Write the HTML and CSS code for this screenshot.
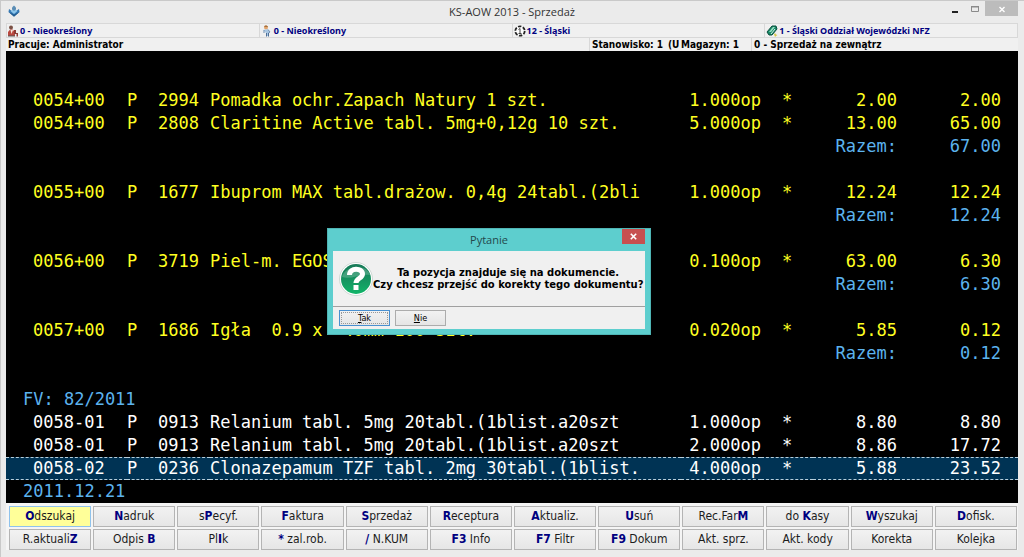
FILE: index.html
```html
<!DOCTYPE html>
<html lang="pl">
<head>
<meta charset="utf-8">
<title>KS-AOW 2013 - Sprzedaż</title>
<link rel="stylesheet" href="styles.css">
</head>
<body>
<div class="window">
  <header class="titlebar">
    <svg class="app-icon" viewBox="0 0 12 12" aria-hidden="true"><path d="M6 11.500.500 7 1 4l3 2h4l3-2 .5 3z" fill="#3478b4"/><path d="m6 9-3.500-3L6 4l3.500 2z" fill="#8cc5ea"/><path d="M4 4.500V2.500L6 .5l2 2v2L6 6z" fill="#5b8db5"/><path d="m.500 7 5.500 2.500L11.500 7 6 11.800z" fill="#245d90"/></svg>
    <h1 class="window-title">KS-AOW 2013 - Sprzedaż</h1>
    <div class="window-controls">
      <button class="win-btn" aria-label="Minimalizuj"><svg viewBox="0 0 10 10"><path d="M2 7h6v2H2z" fill="#222"/></svg></button>
      <button class="win-btn" aria-label="Maksymalizuj"><svg viewBox="0 0 10 10"><path d="M1.500 2.500h7v5h-7z" fill="none" stroke="#8a8a8a"/><path d="M1 2h8v1.500H1z" fill="#8a8a8a"/></svg></button>
      <button class="win-btn win-close" aria-label="Zamknij"><svg viewBox="0 0 10 10"><path d="m2.500 3 5 5m0-5-5 5" stroke="#fff" stroke-width="1.400"/></svg></button>
    </div>
  </header>

  <div class="info-row">
    <div class="info-cell"><svg class="info-icon" viewBox="0 0 12 12" aria-hidden="true"><circle cx="4" cy="2.500" r="2" fill="#7a5145"/><path d="M1 11V7l2-2.500h2.500L8 7v4z" fill="#b9483f"/><path d="m3.500 5 1 4L6 5z" fill="#f4e6dc"/><path d="M7 5h2v3h2v3.500H9.500V9H7z" fill="#8c3b34"/><path d="M1 11h7" stroke="#555"/></svg>0 - Nieokreślony</div>
    <div class="info-cell"><svg class="info-icon" viewBox="0 0 12 12" aria-hidden="true"><circle cx="5" cy="2.500" r="2" fill="#e2a56d"/><path d="M3 1.800C3.500 0 6.500 0 7 2z" fill="#a06b38"/><path d="m2.500 5 2-.5H7L8 6v5H5V8z" fill="#a9c6e2"/><path d="M7 4.500 9 7 7.500 8M3 5v3" stroke="#6c8db1" fill="none"/><path d="M5.500 8v3.500m2-3.500v3.500" stroke="#4e6d94"/></svg>0 - Nieokreślony</div>
    <div class="info-cell"><svg class="info-icon" viewBox="0 0 12 12" aria-hidden="true"><circle cx="6" cy="6" r="4.700" fill="#fff" stroke="#222" stroke-width="1.800" stroke-dasharray="3.400 1.500"/><path d="M4.500 4.500 6 3.500v5M4.500 8.500h3" fill="none" stroke="#444"/></svg>12 - Śląski</div>
    <div class="info-cell"><svg class="info-icon" viewBox="0 0 12 12" aria-hidden="true"><path d="m1 7 5-6h4l1 3-5 6H3z" fill="#188a68" stroke="#0b4e3d"/><path d="m3 7 4-5h2L5 7z" fill="#9ce0c4"/><path d="m5 9 4-5" stroke="#d9f4e9"/><path d="M8 9.500 9 8l1 1.500 1.500.5-1.500 1-1 1-.5-1.500z" fill="#d6c94b"/></svg>1 - Śląski Oddział Wojewódzki NFZ</div>
  </div>
  <div class="session-row">
    <span class="session-user">Pracuje: Administrator</span>
    <span class="session-station">Stanowisko: 1</span>
    <span class="session-mode">(U</span>
    <span class="session-store">Magazyn: 1</span>
    <span class="session-type">0 - Sprzedaż na zewnątrz</span>
  </div>

  <main class="listing">
    <table class="sales">
      <colgroup><col class="c-doc"><col class="c-kind"><col class="c-code"><col class="c-name"><col class="c-qty"><col class="c-mark"><col class="c-price"><col class="c-value"></colgroup>
      <tbody>
        <tr><td>0054+00</td><td>P</td><td>2994</td><td>Pomadka ochr.Zapach Natury 1 szt.</td><td class="num">1.000op</td><td class="mark">*</td><td class="num">2.00</td><td class="num">2.00</td></tr>
        <tr><td>0054+00</td><td>P</td><td>2808</td><td>Claritine Active tabl. 5mg+0,12g 10 szt.</td><td class="num">5.000op</td><td class="mark">*</td><td class="num">13.00</td><td class="num">65.00</td></tr>
        <tr class="note"><td colspan="7" class="num">Razem:</td><td class="num">67.00</td></tr>
        <tr><td colspan="8"></td></tr>
        <tr><td>0055+00</td><td>P</td><td>1677</td><td>Ibuprom MAX tabl.drażow. 0,4g 24tabl.(2bli</td><td class="num">1.000op</td><td class="mark">*</td><td class="num">12.24</td><td class="num">12.24</td></tr>
        <tr class="note"><td colspan="7" class="num">Razem:</td><td class="num">12.24</td></tr>
        <tr><td colspan="8"></td></tr>
        <tr><td>0056+00</td><td>P</td><td>3719</td><td>Piel-m. EGOS</td><td class="num">0.100op</td><td class="mark">*</td><td class="num">63.00</td><td class="num">6.30</td></tr>
        <tr class="note"><td colspan="7" class="num">Razem:</td><td class="num">6.30</td></tr>
        <tr><td colspan="8"></td></tr>
        <tr><td>0057+00</td><td>P</td><td>1686</td><td>Igła  0.9 x  40mm 100 szt.</td><td class="num">0.020op</td><td class="mark">*</td><td class="num">5.85</td><td class="num">0.12</td></tr>
        <tr class="note"><td colspan="7" class="num">Razem:</td><td class="num">0.12</td></tr>
        <tr><td colspan="8"></td></tr>
        <tr class="note"><td colspan="8" class="heading">FV: 82/2011</td></tr>
        <tr class="invoice"><td>0058-01</td><td>P</td><td>0913</td><td>Relanium tabl. 5mg 20tabl.(1blist.a20szt</td><td class="num">1.000op</td><td class="mark">*</td><td class="num">8.80</td><td class="num">8.80</td></tr>
        <tr class="invoice"><td>0058-01</td><td>P</td><td>0913</td><td>Relanium tabl. 5mg 20tabl.(1blist.a20szt</td><td class="num">2.000op</td><td class="mark">*</td><td class="num">8.86</td><td class="num">17.72</td></tr>
        <tr class="invoice selected"><td>0058-02</td><td>P</td><td>0236</td><td>Clonazepamum TZF tabl. 2mg 30tabl.(1blist.</td><td class="num">4.000op</td><td class="mark">*</td><td class="num">5.88</td><td class="num">23.52</td></tr>
        <tr class="note"><td colspan="8" class="heading">2011.12.21</td></tr>
      </tbody>
    </table>
  </main>

  <footer class="commands">
    <button class="cmd active"><b>O</b>dszukaj</button>
    <button class="cmd"><b>N</b>adruk</button>
    <button class="cmd">s<b>P</b>ecyf.</button>
    <button class="cmd"><b>F</b>aktura</button>
    <button class="cmd"><b>S</b>przedaż</button>
    <button class="cmd"><b>R</b>eceptura</button>
    <button class="cmd"><b>A</b>ktualiz.</button>
    <button class="cmd"><b>U</b>suń</button>
    <button class="cmd">Rec.Far<b>M</b></button>
    <button class="cmd">do <b>K</b>asy</button>
    <button class="cmd"><b>W</b>yszukaj</button>
    <button class="cmd"><b>D</b>ofisk.</button>
    <button class="cmd">R.aktuali<b>Z</b></button>
    <button class="cmd">Odpis <b>B</b></button>
    <button class="cmd">Pl<b>I</b>k</button>
    <button class="cmd"><b>*</b> zal.rob.</button>
    <button class="cmd"><b>/</b> N.KUM</button>
    <button class="cmd"><b>F3</b> Info</button>
    <button class="cmd"><b>F7</b> Filtr</button>
    <button class="cmd"><b>F9</b> Dokum</button>
    <button class="cmd">Akt. sprz.</button>
    <button class="cmd">Akt. kody</button>
    <button class="cmd">Korekta</button>
    <button class="cmd">Kolejka</button>
  </footer>
</div>

<section class="dialog" role="dialog" aria-labelledby="dialog-title">
  <header class="dialog-head">
    <h2 class="dialog-title" id="dialog-title">Pytanie</h2>
    <button class="dialog-close" aria-label="Zamknij"><svg viewBox="0 0 10 10"><path d="m2 2 6 6m0-6L2 8" stroke="#fff" stroke-width="1.800"/></svg></button>
  </header>
  <div class="dialog-panel">
    <div class="dialog-body">
      <svg class="question" viewBox="0 0 34 34" aria-hidden="true">
        <defs><linearGradient id="green" x1="0" y1="0" x2="0" y2="1"><stop offset="0" stop-color="#187a58"/><stop offset=".5" stop-color="#159260"/><stop offset="1" stop-color="#10b568"/></linearGradient></defs>
        <circle cx="17" cy="17" r="16.500" fill="#fff" stroke="#c4d0cb" stroke-width=".8"/>
        <circle cx="17" cy="17" r="15" fill="url(#green)"/>
        <path d="M3 15C5 4 28 1 31 13 22 11 12 18 3 15z" fill="#fff" opacity=".2"/>
        <path d="M10.500 13C10.500 5.500 23.500 5.500 23.500 12c0 4.500-6.500 4-6.500 9" fill="none" stroke="#fff" stroke-width="5"/>
        <path d="M14.500 23h5v5h-5z" fill="#fff"/>
      </svg>
      <p class="dialog-text">Ta pozycja znajduje się na dokumencie.<br>Czy chcesz przejść do korekty tego dokumentu?</p>
    </div>
    <div class="dialog-actions">
      <button class="dlg-btn default"><u>T</u>ak</button>
      <button class="dlg-btn"><u>N</u>ie</button>
    </div>
  </div>
</section>
</body>
</html>
```
FILE: styles.css
```css
* { box-sizing: border-box; }

body {
  margin: 0;
  background: #ebebeb;
  color: #000;
  font-family: "DejaVu Sans Condensed", "DejaVu Sans", sans-serif;
}

button { margin: 0; padding: 0; font-family: inherit; color: inherit; }

.window {
  display: flex;
  flex-direction: column;
  min-height: 100vh;
  padding: 0 6px 7px 5px;
  border: 1px solid #c9c9c9;
  border-width: 1px 0 0 1px;
}

/* Title bar */
.titlebar {
  display: grid;
  grid-template-columns: 80px 1fr 80px;
  align-items: start;
  height: 22px;
}
.app-icon { width: 12px; height: 12px; margin: 4px 0 0 2px; }
.window-title {
  margin: 0;
  font: 400 11px/21px "Open Sans", sans-serif;
  text-align: center;
  color: #333;
}
.window-controls { display: flex; justify-content: flex-end; }
.win-btn {
  display: grid;
  place-items: center;
  width: 20px;
  height: 15px;
  border: 0;
  background: none;
}
.win-btn svg { width: 10px; height: 10px; }
.win-close { width: 33px; background: #bcbcbc; }

/* Status rows */
.info-row {
  display: grid;
  grid-template-columns: repeat(4, 1fr);
  height: 15px;
  border: 1px solid #d8d8d8;
  border-left: 0;
  background: #f0f0f0;
}
.info-cell {
  display: flex;
  align-items: center;
  gap: 1px;
  padding-left: 1px;
  border-left: 1px solid #d8d8d8;
  font-family: "Noto Sans", sans-serif;
  font-size: 9px;
  font-weight: 700;
  line-height: 13px;
  color: #000080;
  white-space: nowrap;
}
.info-icon { width: 12px; height: 12px; }
.info-cell:first-child { padding-left: 0; }

.session-row {
  display: grid;
  grid-template-columns: 583fr 77fr 13fr 72fr 267fr;
  height: 13px;
  background: #f0f0f0;
  font-size: 10px;
  font-weight: 700;
  line-height: 13px;
  white-space: nowrap;
}
.session-row span { overflow: hidden; padding-left: 2px; }
.session-station, .session-type { border-left: 1px solid #d8d8d8; }

/* Listing */
.listing { flex: 1; padding-top: 38px; background: #000; }
.sales {
  width: 100%;
  table-layout: fixed;
  border-collapse: separate;
  border-spacing: 0;
  color: #ffff20;
  font: 17px/23px "DejaVu Sans Mono", monospace;
}
.sales tr { height: 23px; }
.sales td { padding: 0; white-space: pre; }
.sales td:first-child { padding-left: 27px; }
.sales td.heading { padding-left: 17px; }
.sales .num { text-align: right; }
.sales td:last-child { padding-right: 17px; }
.sales .mark { text-align: center; }
.c-doc { width: 121px; }
.c-kind { width: 31px; }
.c-code { width: 52px; }
.c-qty { width: 80px; }
.c-mark { width: 52px; }
.c-price { width: 84px; }
.c-value { width: 121px; }
.sales .note { color: #5cb3ee; }
.sales .invoice { color: #fff; }
.sales .selected { background: #003354; }
.sales .selected td {
  border: 1px dashed #b9d0dd;
  border-width: 1px 0;
  line-height: 21px;
}

/* Function keys */
.commands {
  display: grid;
  grid-template-columns: repeat(12, 1fr);
  gap: 2px;
  padding: 3px 1px 0 3px;
  background: #f5f5f5;
}
.cmd {
  height: 21px;
  border: 1px solid #b4b4b4;
  background: linear-gradient(#f2f2f2, #e6e6e6);
  font-size: 12px;
  line-height: 19px;
  white-space: nowrap;
  color: #1c1c1c;
}
.cmd b { color: #000080; }
.cmd.active { background: #ffff99; border-color: #8fc2ec; }

/* Message dialog */
.dialog {
  position: absolute;
  top: 228px;
  left: 327px;
  width: 324px;
  padding: 0 5px 5px;
  background: #5dcece;
  border: 1px solid #4fb5b5;
}
.dialog-head {
  display: grid;
  grid-template-columns: 1fr auto 1fr;
  height: 22px;
}
.dialog-title {
  grid-column: 2;
  margin: 0;
  font: 400 11px/22px "Open Sans", sans-serif;
  color: #24494c;
}
.dialog-close {
  display: grid;
  place-items: center;
  justify-self: end;
  width: 23px;
  height: 15px;
  border: 0;
  background: #c75050;
}
.dialog-close svg { width: 9px; height: 9px; }
.dialog-panel { background: #f0f0f0; }
.dialog-body {
  display: flex;
  align-items: center;
  height: 56px;
  padding: 0 2px 0 6px;
  border-bottom: 1px solid #a0a0a0;
}
.question { flex: none; width: 34px; height: 34px; }
.dialog-text {
  flex: 1;
  margin: 0;
  font: 700 10px/12px "DejaVu Sans", sans-serif;
  text-align: center;
  white-space: nowrap;
}
.dialog-actions { display: flex; gap: 5px; padding: 3px 6px; }
.dlg-btn {
  width: 51px;
  height: 16px;
  border: 1px solid #acacac;
  background: linear-gradient(#f2f2f2, #e5e5e5);
  font-size: 9px;
  line-height: 14px;
}
.dlg-btn.default { border-color: #4a90d0; outline: 1px dotted #999; outline-offset: -3px; }
```
